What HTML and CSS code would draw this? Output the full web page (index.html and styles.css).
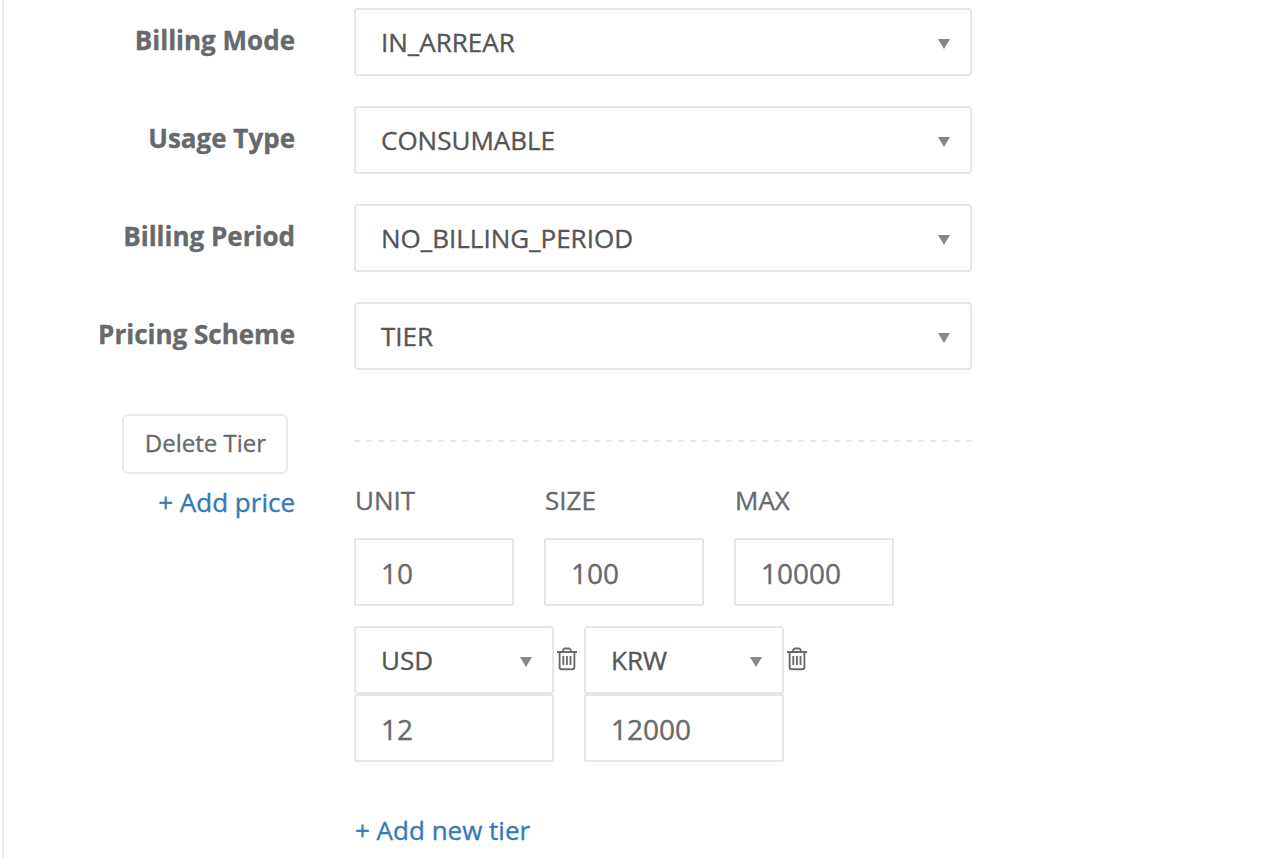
FILE: index.html
```
<!DOCTYPE html>
<html lang="en">
<head>
<meta charset="utf-8">
<title>Usage pricing</title>
<link rel="stylesheet" href="styles.css">
</head>
<body>
<svg class="sprite" aria-hidden="true">
  <symbol id="trash" viewBox="0 0 20 24">
    <path d="M0 5H20M5.4 5L6.4 2.5Q6.8 1.5 7.8 1.5H12Q13 1.5 13.4 2.5L14.4 5M2.6 5V20.2Q2.6 22.2 4.6 22.2H15.4Q17.4 22.2 17.4 20.2V5M6.3 9V18M9.9 9V18M13.5 9V18" fill="none" stroke="currentColor" stroke-width="1.85"/>
  </symbol>
  <symbol id="arrow" viewBox="0 0 12 10"><path d="M0 0H12L6 10Z" fill="#888"/></symbol>
</svg>
<main class="panel">
  <div class="row"><div class="label">Billing Mode</div><div class="select wide"><span>IN_ARREAR</span><svg class="arrow"><use href="#arrow"/></svg></div></div>
  <div class="row"><div class="label">Usage Type</div><div class="select wide"><span>CONSUMABLE</span><svg class="arrow"><use href="#arrow"/></svg></div></div>
  <div class="row"><div class="label">Billing Period</div><div class="select wide"><span>NO_BILLING_PERIOD</span><svg class="arrow"><use href="#arrow"/></svg></div></div>
  <div class="row"><div class="label">Pricing Scheme</div><div class="select wide"><span>TIER</span><svg class="arrow"><use href="#arrow"/></svg></div></div>
  <section class="tier">
    <div class="actions">
      <button class="delete">Delete Tier</button>
      <a class="link">+ Add price</a>
    </div>
    <div class="detail">
      <div class="divider"></div>
      <div class="limits">
        <div class="limit"><span class="caption">UNIT</span><div class="input">10</div></div>
        <div class="limit"><span class="caption">SIZE</span><div class="input">100</div></div>
        <div class="limit"><span class="caption">MAX</span><div class="input">10000</div></div>
      </div>
      <div class="prices">
        <div class="price">
          <div class="select"><span>USD</span><svg class="arrow"><use href="#arrow"/></svg></div>
          <svg class="trash"><use href="#trash"/></svg>
          <div class="input">12</div>
        </div>
        <div class="price">
          <div class="select"><span>KRW</span><svg class="arrow"><use href="#arrow"/></svg></div>
          <svg class="trash"><use href="#trash"/></svg>
          <div class="input">12000</div>
        </div>
      </div>
      <a class="link new-tier">+ Add new tier</a>
    </div>
  </section>
</main>
</body>
</html>
```
FILE: styles.css
```
* { box-sizing: border-box; }
body {
  margin: 0;
  height: 858px;
  overflow: hidden;
  background: #fff;
  color: #676a6c;
  font: 26px/36px "Open Sans", sans-serif;
  -webkit-text-stroke: 0.35px currentColor;
}
.sprite { display: none; }
.panel {
  height: 858px;
  margin-left: 2px;
  padding-top: 8px;
  border-left: 2px solid #e7eaec;
}
.row { display: flex; gap: 59px; margin-bottom: 30px; }
.label {
  width: 291px;
  padding-top: 14px;
  text-align: right;
  font-weight: 700;
}
.select, .input {
  display: flex;
  align-items: center;
  height: 68px;
  border: 2px solid #e5e6e7;
}
.select {
  width: 200px;
  justify-content: space-between;
  padding: 0 20px 0 25px;
  border-radius: 4px;
  color: #555;
}
.wide { width: 618px; }
.arrow { width: 12px; height: 10px; margin-top: 3px; }
.input {
  padding: 2px 0 0 25px;
  border-radius: 2px;
  font-size: 28px;
}
.tier { display: flex; gap: 59px; padding-top: 14px; }
.actions {
  display: flex;
  flex-direction: column;
  align-items: flex-end;
  width: 291px;
}
.delete {
  width: 166px;
  height: 60px;
  margin: 0 7px 10px 0;
  padding: 0 0 2px 1px;
  border: 2px solid #e7eaec;
  border-radius: 6px;
  background: #fff;
  color: inherit;
  font: 24px/36px "Open Sans", sans-serif;
}
.link { color: #337ab7; }
.detail { width: 618px; padding-top: 26px; }
.divider {
  height: 2px;
  background: repeating-linear-gradient(90deg, #e7eaec 0 6px, transparent 6px 12px);
}
.limits { display: flex; gap: 30px; padding-top: 40px; }
.limit { width: 160px; }
.caption { display: block; margin-bottom: 20px; padding-left: 1px; }
.prices { display: flex; gap: 7px; margin-top: 20px; }
.price {
  display: grid;
  grid-template-columns: 200px 20px;
  column-gap: 3px;
}
.trash { width: 20px; height: 24px; margin-top: 21px; }
.new-tier { display: block; padding: 50px 0 0 1px; }
```
